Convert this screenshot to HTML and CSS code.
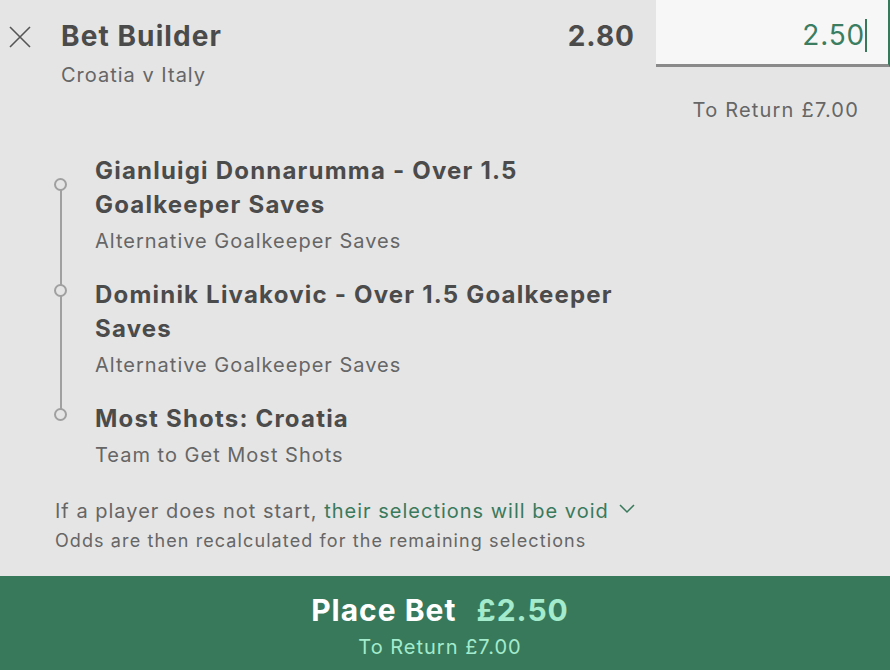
FILE: index.html
```html
<!DOCTYPE html>
<html lang="en">
<head>
    <meta charset="UTF-8">
    <meta name="viewport" content="width=device-width, initial-scale=1.0">
    <title>Bet Builder</title>
    <link rel="stylesheet" href="styles.css">
</head>
<body>
    <div class="slip">
        <div class="header">
            <button class="close" aria-label="Remove">
                <svg width="22" height="22" viewBox="0 0 22 22">
                    <path d="M1 1 L21 21 M21 1 L1 21" stroke="#555" stroke-width="1.6" fill="none"/>
                </svg>
            </button>
            <div class="info">
                <div class="title">Bet Builder</div>
                <div class="match">Croatia v Italy</div>
            </div>
            <div class="odds">2.80</div>
            <div class="stake">
                <span class="stake-value">2.50</span><span class="caret"></span>
            </div>
        </div>

        <div class="return">To Return £7.00</div>

        <!-- Sélections du bet builder -->
        <ul class="legs">
            <li class="leg">
                <div class="leg-title">Gianluigi Donnarumma - Over 1.5 Goalkeeper Saves</div>
                <div class="leg-market">Alternative Goalkeeper Saves</div>
            </li>
            <li class="leg">
                <div class="leg-title">Dominik Livakovic - Over 1.5 Goalkeeper Saves</div>
                <div class="leg-market">Alternative Goalkeeper Saves</div>
            </li>
            <li class="leg">
                <div class="leg-title">Most Shots: Croatia</div>
                <div class="leg-market">Team to Get Most Shots</div>
            </li>
        </ul>

        <div class="note">
            <div class="note-main">If a player does not start, <span class="note-link">their selections will be void
                <svg class="chevron" width="16" height="10" viewBox="0 0 16 10">
                    <path d="M1 1 L8 8 L15 1" stroke="#3a7a5c" stroke-width="1.5" fill="none"/>
                </svg></span>
            </div>
            <div class="note-sub">Odds are then recalculated for the remaining selections</div>
        </div>

        <button class="place">
            <span class="place-main">Place Bet <span class="place-amount">£2.50</span></span>
            <span class="place-return">To Return £7.00</span>
        </button>
    </div>
</body>
</html>
```

FILE: styles.css
```css
body {
    margin: 0;
    background: #e5e5e5;
    font-family: 'Inter', 'Noto Sans', sans-serif;
    color: #4b4b4b;
}

.slip {
    height: 100vh;
    display: flex;
    flex-direction: column;
}

.header {
    display: flex;
    align-items: flex-start;
}

.close {
    width: 61px;
    padding: 26px 0 0 9px;
    border: none;
    background: none;
    text-align: left;
    cursor: pointer;
}

.close svg {
    display: block;
}

.info {
    flex: 1;
    padding-top: 19px;
}

.title {
    font-size: 28px;
    line-height: 34px;
    font-weight: 700;
    letter-spacing: 1.1px;
    color: #4b4b4b;
}

.match {
    margin-top: 9px;
    font-size: 20px;
    line-height: 26px;
    letter-spacing: 1px;
    color: #666;
}

.odds {
    padding-top: 19px;
    margin-right: 21px;
    font-size: 28px;
    line-height: 34px;
    font-weight: 700;
    letter-spacing: 1px;
}

.stake {
    width: 234px;
    height: 67px;
    box-sizing: border-box;
    background: #f7f7f7;
    border-bottom: 3px solid #8a8a8a;
    border-right: 2px solid #37795a;
    display: flex;
    justify-content: flex-end;
    align-items: center;
    padding-right: 21px;
    padding-top: 6px;
}

.stake-value {
    font-size: 28px;
    letter-spacing: 0.8px;
    color: #3b7d60;
}

.caret {
    width: 2px;
    height: 33px;
    background: #37795a;
    margin-left: 0;
}

.return {
    margin-top: 9px;
    padding-right: 31px;
    text-align: right;
    font-size: 20px;
    line-height: 26px;
    letter-spacing: 1.2px;
    color: #666;
}

.legs {
    list-style: none;
    margin: 31px 0 0;
    padding: 0 250px 0 95px;
    position: relative;
}

.legs::before {
    content: '';
    position: absolute;
    left: 60px;
    top: 32px;
    bottom: 54px;
    width: 2px;
    background: #a0a0a0;
}

.leg {
    position: relative;
    margin-bottom: 24px;
}

.leg:last-child {
    margin-bottom: 0;
}

.leg::before {
    content: '';
    position: absolute;
    left: -41px;
    top: 6px;
    width: 9px;
    height: 9px;
    border: 2px solid #a0a0a0;
    border-radius: 50%;
    background: #e5e5e5;
    z-index: 1;
}

.leg:first-child::before {
    top: 24px;
}

.leg-title {
    font-size: 24px;
    line-height: 34px;
    font-weight: 700;
    letter-spacing: 1.2px;
    color: #4b4b4b;
}

.leg-market {
    margin-top: 6px;
    font-size: 20px;
    line-height: 26px;
    letter-spacing: 1px;
    color: #666;
}

.note {
    margin-top: 30px;
    padding-left: 55px;
}

.note-main {
    font-size: 20px;
    line-height: 26px;
    letter-spacing: 1px;
    color: #666;
}

.note-link {
    color: #3a7a5c;
}

.chevron {
    margin-left: 4px;
    vertical-align: 4px;
}

.note-sub {
    margin-top: 5px;
    font-size: 18px;
    line-height: 24px;
    letter-spacing: 1.1px;
    color: #666;
}

.place {
    margin-top: auto;
    height: 94px;
    border: none;
    background: #37795a;
    display: flex;
    flex-direction: column;
    align-items: center;
    padding: 16px 10px 0 0;
    font-family: inherit;
    cursor: pointer;
}

.place-main {
    font-size: 30px;
    line-height: 36px;
    font-weight: 700;
    letter-spacing: 1px;
    color: #fff;
}

.place-amount {
    margin-left: 12px;
    color: #a3ebcc;
}

.place-return {
    margin-top: 6px;
    font-size: 20px;
    line-height: 26px;
    letter-spacing: 1px;
    color: #a3ebcc;
}
```
